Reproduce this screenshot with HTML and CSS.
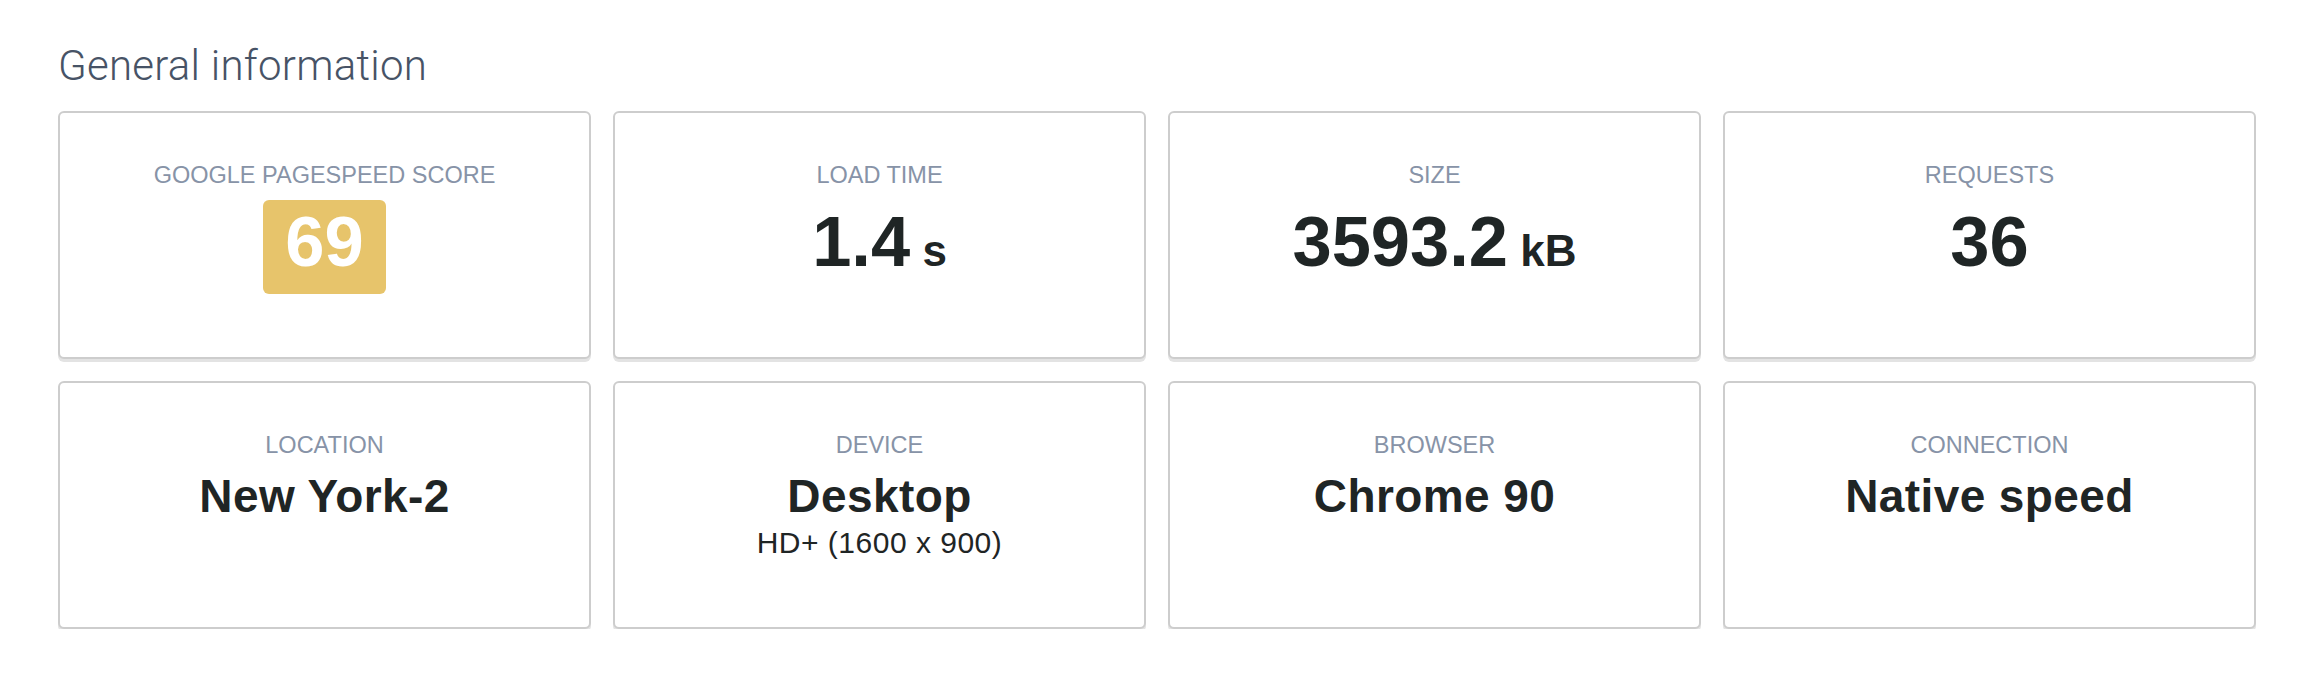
FILE: index.html
```html
<!DOCTYPE html>
<html lang="en">
<head>
<meta charset="utf-8">
<title>General information</title>
<link rel="stylesheet" href="styles.css">
</head>
<body>
<section class="page">
  <h2 class="title">General information</h2>
  <div class="grid">
    <div class="card">
      <div class="label">GOOGLE PAGESPEED SCORE</div>
      <div class="big"><span class="badge">69</span></div>
    </div>
    <div class="card">
      <div class="label">LOAD TIME</div>
      <div class="big"><span class="num">1.4<span class="unit"> s</span></span></div>
    </div>
    <div class="card">
      <div class="label">SIZE</div>
      <div class="big"><span class="num">3593.2<span class="unit"> kB</span></span></div>
    </div>
    <div class="card">
      <div class="label">REQUESTS</div>
      <div class="big"><span class="num">36</span></div>
    </div>
    <div class="card">
      <div class="label">LOCATION</div>
      <div class="text">New York-2</div>
    </div>
    <div class="card">
      <div class="label">DEVICE</div>
      <div class="text">Desktop</div>
      <div class="sub">HD+ (1600 x 900)</div>
    </div>
    <div class="card">
      <div class="label">BROWSER</div>
      <div class="text">Chrome 90</div>
    </div>
    <div class="card">
      <div class="label">CONNECTION</div>
      <div class="text">Native speed</div>
    </div>
  </div>
</section>
</body>
</html>
```
FILE: styles.css
```css
html, body {
  margin: 0;
  padding: 0;
  background: #ffffff;
}

body {
  font-family: "Liberation Sans", Arial, sans-serif;
}

.page {
  padding: 41px 58px 0;
}

.title {
  margin: 0 0 20px;
  font-family: Roboto, "Liberation Sans", sans-serif;
  font-weight: 300;
  font-size: 42px;
  line-height: 50px;
  letter-spacing: 0.25px;
  color: #475366;
}

.grid {
  display: grid;
  grid-template-columns: repeat(4, 1fr);
  gap: 22px;
}

.card {
  box-sizing: border-box;
  height: 248px;
  border: 2px solid #cdcdcd;
  border-radius: 6px;
  box-shadow: 0 3px 0 #e3e3e3;
  background: #fff;
  padding-top: 48px;
  text-align: center;
}

.label {
  font-size: 23.5px;
  line-height: 28px;
  color: #8793a7;
}

.big {
  margin-top: 11px;
  font-weight: bold;
  font-size: 70.5px;
  line-height: 80px;
  color: #1f2525;
}

.num {
  display: inline-block;
  padding-top: 2px;
}

.unit {
  font-size: 44px;
}

.badge {
  display: inline-block;
  padding: 2px 22px 12px;
  border-radius: 6px;
  background: #e7c46b;
  color: #ffffff;
}

.text {
  margin-top: 11px;
  font-weight: bold;
  font-size: 46px;
  line-height: 53px;
  letter-spacing: 0.4px;
  color: #1f2525;
}

.sub {
  margin-top: 3px;
  font-size: 30px;
  line-height: 34px;
  letter-spacing: 0.5px;
  color: #1f2525;
}
```
